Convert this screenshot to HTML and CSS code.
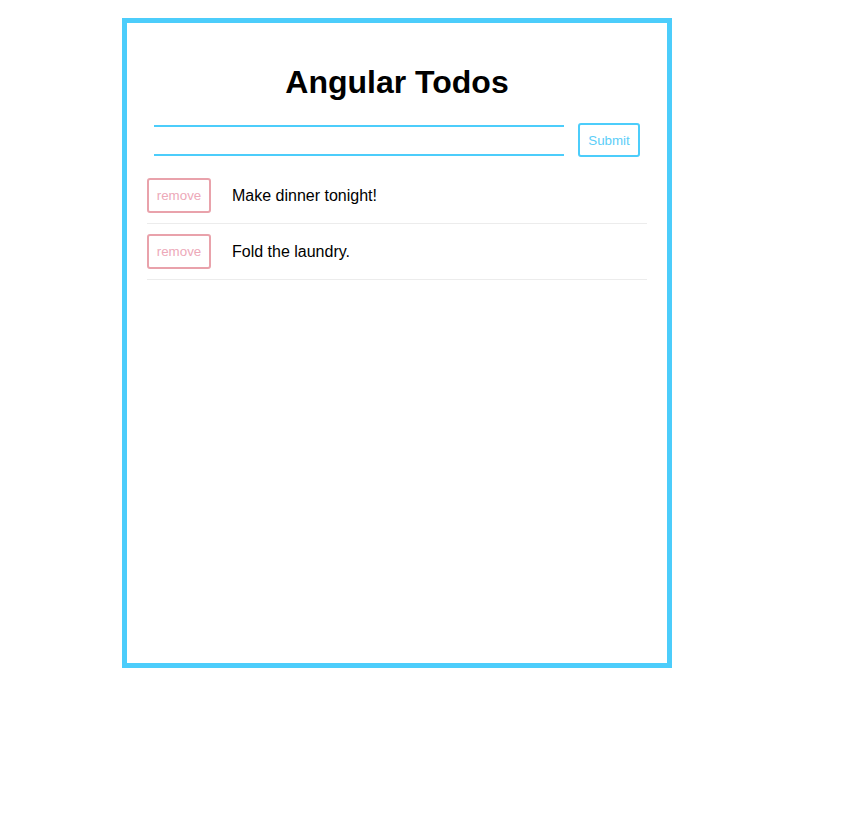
FILE: index.html
```html
<!DOCTYPE html>
<html lang="en">
<head>
<meta charset="utf-8">
<title>Angular Todos</title>
<link rel="stylesheet" href="styles.css">
</head>
<body>
<div class="app">
  <h1 class="title">Angular Todos</h1>
  <form class="todo-form">
    <input class="todo-input" type="text">
    <button class="submit-btn" type="button">Submit</button>
  </form>
  <ul class="todo-list">
    <li class="todo-item">
      <button class="remove-btn" type="button">remove</button>
      <span class="todo-text">Make dinner tonight!</span>
    </li>
    <li class="todo-item">
      <button class="remove-btn" type="button">remove</button>
      <span class="todo-text">Fold the laundry.</span>
    </li>
  </ul>
</div>
</body>
</html>
```

FILE: styles.css
```css
html, body {
  margin: 0;
  padding: 0;
  background: #fff;
}

body {
  font-family: "Liberation Sans", Arial, sans-serif;
  color: #000;
}

.app {
  box-sizing: border-box;
  width: 550px;
  height: 650px;
  margin: 18px 0 0 122px;
  border: 5px solid #4ccdfb;
  background: #fff;
}

.title {
  margin: 41px 0 22px;
  font-size: 32px;
  line-height: 37px;
  font-weight: bold;
  text-align: center;
}

.todo-form {
  display: flex;
  align-items: center;
  gap: 14px;
  margin: 0 27px;
}

.todo-input {
  box-sizing: border-box;
  flex: 1;
  height: 31px;
  margin: 0;
  padding: 0 4px;
  border: none;
  border-top: 2px solid #4ccdfb;
  border-bottom: 2px solid #4ccdfb;
  outline: none;
  font-family: inherit;
  font-size: 16px;
  background: transparent;
}

.submit-btn,
.remove-btn {
  box-sizing: border-box;
  height: 34px;
  margin: 0;
  padding: 0;
  background: #fff;
  border-radius: 3px;
  font-family: "Liberation Sans", Arial, sans-serif;
  font-size: 13.333px;
  cursor: pointer;
}

.submit-btn {
  width: 62px;
  border: 2px solid #4ccdfb;
  color: #5ccef8;
}

.todo-list {
  list-style: none;
  margin: 11px 20px 0;
  padding: 0;
}

.todo-item {
  display: flex;
  align-items: center;
  gap: 21px;
  padding: 10px 0;
  border-bottom: 1px solid #ececec;
}

.remove-btn {
  width: 64px;
  height: 35px;
  border: 2px solid #e9a2ab;
  color: #eda9b9;
}

.todo-text {
  font-size: 16px;
  line-height: 18px;
}
```
